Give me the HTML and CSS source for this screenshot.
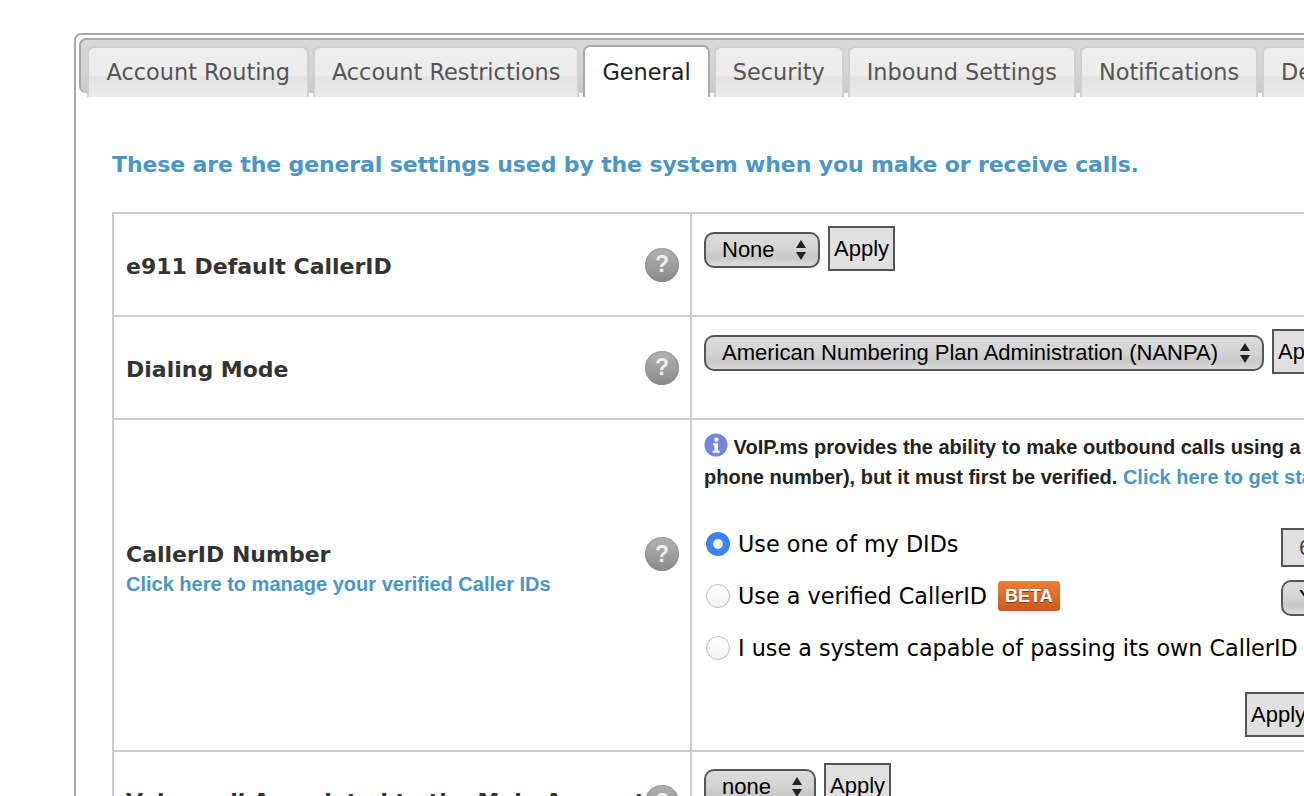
FILE: index.html
```html
<!DOCTYPE html>
<html lang="en">
<head>
<meta charset="utf-8">
<title>General settings</title>
<link rel="stylesheet" href="styles.css">
</head>
<body>
<div class="panel">
  <ul class="tabs">
    <li class="tab">Account Routing</li>
    <li class="tab">Account Restrictions</li>
    <li class="tab active">General</li>
    <li class="tab">Security</li>
    <li class="tab">Inbound Settings</li>
    <li class="tab">Notifications</li>
    <li class="tab">Devices</li>
  </ul>
  <div class="content">
    <h2 class="intro">These are the general settings used by the system when you make or receive calls.</h2>
    <div class="settings">
      <div class="row r1">
        <div class="label"><div class="label-text"><b>e911 Default CallerID</b></div><span class="help">?</span></div>
        <div class="value top1"><span class="select s-none">None<svg class="arrows" viewBox="0 0 12 22"><path d="M6 1 11 9H1ZM6 21 1 13H11Z"/></svg></span><button class="apply">Apply</button></div>
      </div>
      <div class="row r1">
        <div class="label"><div class="label-text"><b>Dialing Mode</b></div><span class="help">?</span></div>
        <div class="value top2"><span class="select s-nanpa">American Numbering Plan Administration (NANPA)<svg class="arrows" viewBox="0 0 12 22"><path d="M6 1 11 9H1ZM6 21 1 13H11Z"/></svg></span><button class="apply">Apply</button></div>
      </div>
      <div class="row r3">
        <div class="label label-tall"><div class="label-text"><b>CallerID Number</b><a class="manage">Click here to manage your verified Caller IDs</a></div><span class="help">?</span></div>
        <div class="value stack">
          <p class="note"><svg class="info" viewBox="0 0 24 24"><circle cx="12" cy="12" r="11.500" fill="#7286dc"/><circle cx="12.400" cy="6.600" r="2.200" fill="#fff"/><path d="M9 10.200h5v7.600h1.600v2H8.600v-2h1.800v-5.600H9z" fill="#fff"/></svg> VoIP.ms provides the ability to make outbound calls using a<br>phone number), but it must first be verified. <a class="link">Click here to get started</a></p>
          <div class="choice"><span class="radio on"></span><span class="choice-text">Use one of my DIDs</span><span class="field">6</span></div>
          <div class="choice"><span class="radio"></span><span class="choice-text">Use a verified CallerID</span><span class="beta">BETA</span><span class="select s-field">Y</span></div>
          <div class="choice"><span class="radio"></span><span class="choice-text">I use a system capable of passing its own CallerID</span></div>
          <div class="apply-row"><button class="apply">Apply</button></div>
        </div>
      </div>
      <div class="row r4">
        <div class="label"><div class="label-text"><b>Voicemail Associated to the Main Account</b></div><span class="help">?</span></div>
        <div class="value top4"><span class="select s-small">none<svg class="arrows" viewBox="0 0 12 22"><path d="M6 1 11 9H1ZM6 21 1 13H11Z"/></svg></span><button class="apply">Apply</button></div>
      </div>
    </div>
  </div>
</div>
</body>
</html>
```

FILE: styles.css
```css
html, body { margin: 0; height: 796px; overflow: hidden; background: #fff; }
body { padding: 33px 0 0 74px; box-sizing: border-box; width: 1304px; }
.panel { width: 1400px; height: 1000px; box-sizing: border-box; border: 2px solid #a9a9a9; border-radius: 7px; padding: 3px; background: #fff; font-family: "DejaVu Sans", sans-serif; color: #333; }
.tabs { list-style: none; margin: 0; padding: 6px 0 0 6px; height: 47px; display: flex; gap: 4px; border: 2px solid #a9a9a9; border-bottom: 0; border-radius: 7px 7px 0 7px; background: linear-gradient(#d8d8d8, #d4d4d4 60%, #c8c8c8); box-sizing: content-box; }
.tab { flex: none; height: 51px; box-sizing: border-box; padding: 10px 17px 0; font-size: 22.4px; line-height: 28px; color: #555; white-space: nowrap; border: 2px solid #d0d0d0; border-bottom: 0; border-radius: 7px 7px 0 0; background: linear-gradient(#ededed, #ececec 55%, #e4e4e4 60%, #eaeaea); }
.tab:first-child { padding-left: 17.5px; }
.tab.active { background: #fff; color: #222; border-color: #aaa; height: 52px; margin-top: -1px; padding-top: 11px; }
.content { padding: 0 0 0 33px; }
.intro { margin: 0; padding: 57px 0 0; height: 62px; font-size: 22px; letter-spacing: -0.125px; line-height: 30px; font-weight: 700; color: #4a96c8; white-space: nowrap; }
.settings { border-top: 2px solid #ccc; border-left: 2px solid #ccc; width: 1400px; }
.row { display: flex; border-bottom: 2px solid #ccc; box-sizing: border-box; }
.r1 { height: 103px; }
.r3 { height: 332px; }
.r4 { height: 100px; border-bottom: 0; }
.label { width: 578px; flex: none; box-sizing: border-box; border-right: 2px solid #ccc; display: flex; align-items: center; justify-content: space-between; padding: 0 11px 0 12px; }
.label-text { font-size: 22px; line-height: 30px; padding-top: 4px; color: #333; white-space: nowrap; }
.label-text b { display: block; }
.label-tall .label-text { padding: 0 0 32px; }
.label-tall .help { margin-bottom: 62px; }
.r4 .label-text { padding-top: 0; }
.manage, .link { color: #4a96c8; font-family: "Liberation Sans", sans-serif; font-weight: 700; font-size: 20px; }
.manage { display: block; margin-top: -1px; }
.help { width: 34px; height: 34px; border-radius: 50%; flex: none; display: flex; align-items: center; justify-content: center; background: linear-gradient(#b4b4b4, #8a8a8a); color: #eee; font: 700 23px/1 "Liberation Sans", sans-serif; box-shadow: inset 0 0 3px #808080; }
.value { padding: 0 0 0 12px; white-space: nowrap; font-family: "Liberation Sans", sans-serif; color: #000; display: flex; align-items: flex-start; gap: 8px; }
.top1 { padding-top: 12px; }
.top2 { padding-top: 12px; }
.top4 { padding-top: 11px; }
.select { display: inline-flex; align-items: center; justify-content: space-between; box-sizing: border-box; height: 36px; margin-top: 6px; padding: 0 11px 0 16px; border: 2px solid #555; border-radius: 10px; background: linear-gradient(#dcdcdc, #d4d4d4 45%, #c8c8c8 75%, #dcdcdc); font-size: 22px; }
.arrows { width: 12px; height: 22px; fill: #222; flex: none; }
.s-none { width: 116px; }
.s-nanpa { width: 560px; }
.s-small { width: 112px; }
.apply { box-sizing: border-box; height: 45px; padding: 0 4px; border: 2px solid #555; border-radius: 0; background: #e0e0e0; font: 22px "Liberation Sans", sans-serif; color: #000; }
.stack { display: block; padding-top: 12px; }
.note { margin: 0 0 26px; font-size: 20px; line-height: 30px; font-weight: 700; color: #222; }
.info { width: 24px; height: 24px; vertical-align: -3px; }
.choice { display: flex; align-items: center; height: 52px; font-family: "DejaVu Sans", sans-serif; font-size: 22.3px; position: relative; }
.radio { width: 24px; height: 24px; margin: 0 8px 0 2px; box-sizing: border-box; flex: none; border-radius: 50%; border: 1px solid #bdbdbd; background: linear-gradient(#fff, #f4f4f4); }
.radio.on { border: 7px solid #3b82f6; background: #fff; }
.beta { margin-left: 11px; padding: 0 7px; height: 30px; border-radius: 3px; background: linear-gradient(#ee7f38, #c9581f); color: #fff; font: 700 18px/30px "Liberation Sans", sans-serif; text-shadow: 0 1px 1px #7a3a10; }
.field { position: absolute; left: 577px; top: 10px; width: 140px; height: 39px; box-sizing: border-box; padding: 0 16px; border: 2px solid #555; background: #e0e0e0; line-height: 35px; color: #444; font-size: 22px; font-family: "Liberation Sans", sans-serif; }
.s-field { position: absolute; left: 577px; top: 10px; margin: 0; width: 260px; font-family: "Liberation Sans", sans-serif; }
.apply-row { padding: 18px 0 0 541px; }
```
